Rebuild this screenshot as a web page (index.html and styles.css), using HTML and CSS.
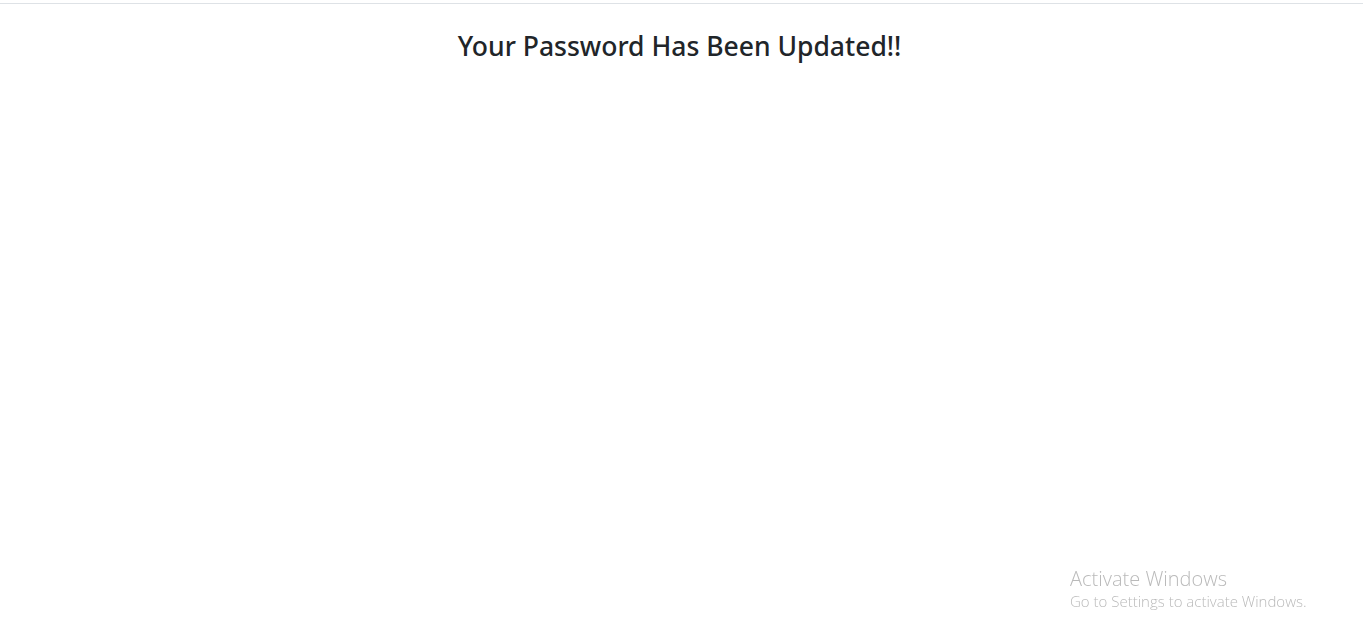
FILE: index.html
```html
<!DOCTYPE html>
<html lang="en">
<head>
<meta charset="utf-8">
<title>Password Updated</title>
<link rel="stylesheet" href="styles.css">
</head>
<body>
<div class="topbar"></div>
<main class="content">
  <h3 class="title">Your Password Has Been Updated!!</h3>
</main>
<div class="watermark">
  <div class="wm-title">Activate Windows</div>
  <div class="wm-sub">Go to Settings to activate Windows.</div>
</div>
</body>
</html>
```
FILE: styles.css
```css
html, body {
  margin: 0;
  padding: 0;
  background: #ffffff;
  height: 100%;
}
body {
  font-family: "Noto Sans", "Open Sans", "Liberation Sans", sans-serif;
  color: #212529;
  overflow: hidden;
}
.topbar {
  height: 3px;
  border-bottom: 1px solid #dee2e6;
}
.content {
  display: flex;
  justify-content: center;
  padding-top: 27px;
  padding-right: 4px;
}
.title {
  margin: 0;
  font-size: 26.5px;
  font-weight: 500;
  line-height: 1.2;
  color: #212529;
}
.watermark {
  position: fixed;
  left: 1070px;
  top: 567px;
  color: #bababa;
  font-family: "Open Sans", "Noto Sans", sans-serif;
  font-weight: 300;
}
.wm-title {
  font-size: 20px;
  line-height: 24px;
}
.wm-sub {
  font-size: 15px;
  line-height: 20px;
}
```
